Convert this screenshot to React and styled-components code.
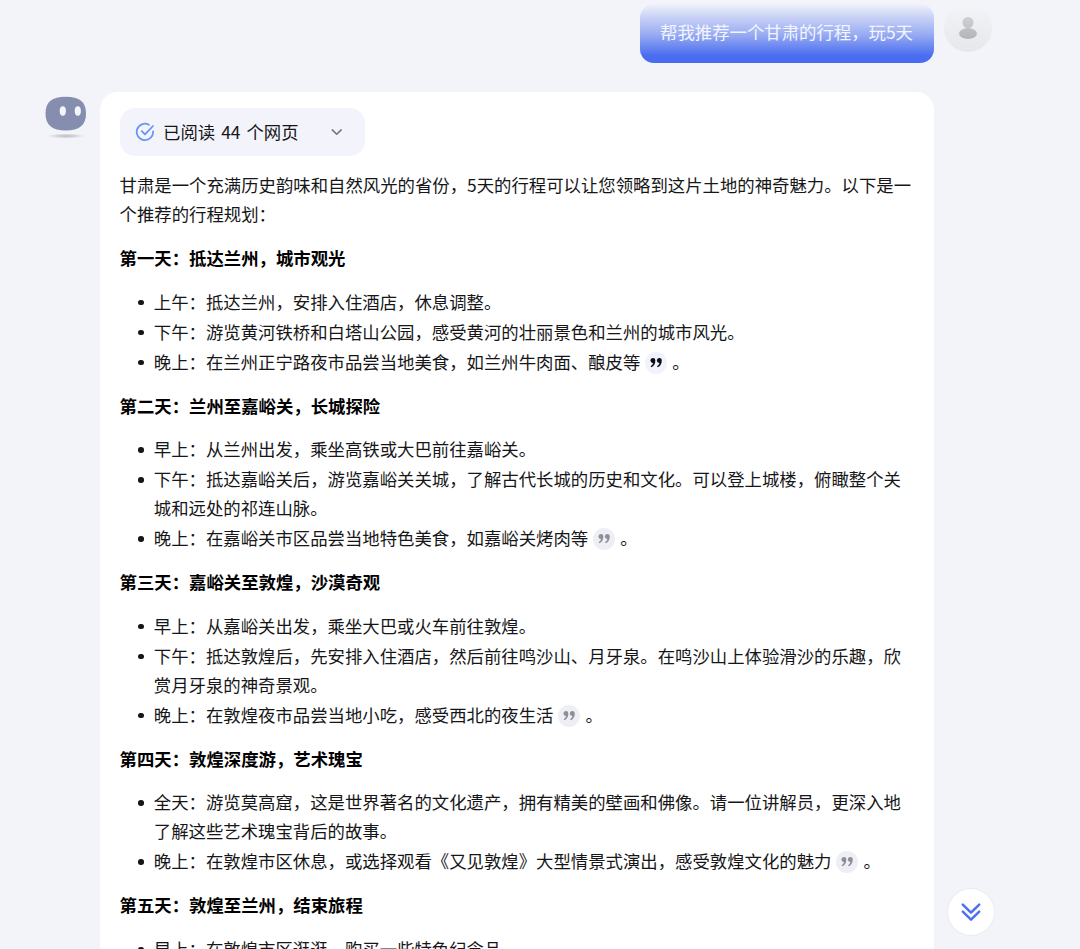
import React from "react";
import styled, { createGlobalStyle } from "styled-components";

const GlobalStyle = createGlobalStyle`
    body {
        margin: 0;
        background-color: #f3f4f9;
        font-family: "Noto Sans CJK SC", "Liberation Sans", sans-serif;
        font-size: 17.39px;
        line-height: 29.2px;
        color: #161618;
    }
`;

const Page = styled.main`
    position: relative;
    box-sizing: border-box;
    width: 1080px;
    height: 949px;
    padding: 4px 88px 0 45px;
    overflow: hidden;
`;

const UserRow = styled.div`
    display: flex;
    align-items: flex-start;
    justify-content: flex-end;
    column-gap: 10px;
    height: 88px;
`;

const UserBubble = styled.div`
    box-sizing: border-box;
    width: 294px;
    height: 59px;
    padding: 13px 20px;
    border-radius: 14px;
    background: linear-gradient(
        #f0f2fa 0%,
        #c9d2f6 22%,
        #98abf2 52%,
        #4b6ef0 87%,
        #486bf0 100%
    );
    color: #f3f5fe;
    white-space: nowrap;
`;

const UserAvatar = styled.svg`
    flex: none;
    width: 48px;
    height: 48px;
`;

const BotRow = styled.div`
    display: flex;
    align-items: flex-start;
`;

const BotAvatar = styled.svg`
    flex: none;
    width: 42px;
    height: 44px;
    margin: 4px 13px 0 0;
`;

const Answer = styled.article`
    box-sizing: border-box;
    width: 834px;
    height: 900px;
    padding: 16px 20px 16px 19.6px;
    border-radius: 18px;
    background-color: #fff;
`;

const SourcesButton = styled.button`
    display: flex;
    align-items: center;
    box-sizing: border-box;
    width: 245px;
    height: 48px;
    padding: 0 20px 0 15px;
    border: 0;
    border-radius: 15px;
    background-color: #f3f4fb;
    color: inherit;
    font: inherit;
    word-spacing: 2.1px;
`;

const SourcesLabel = styled.span`
    flex: 1;
    margin-left: 8.5px;
    text-align: left;
`;

const Intro = styled.p`
    margin: 14px 0 14.8px;
`;

const DayTitle = styled.h3`
    margin: 14.6px 0 14.4px;
    color: #000;
    font-size: inherit;
    font-weight: 700;
`;

const Plan = styled.ul`
    display: flex;
    flex-direction: column;
    row-gap: 0.75px;
    margin: 0;
    padding: 0;
    list-style: none;
`;

const PlanItem = styled.li`
    display: flex;

    &::before {
        content: "";
        flex: none;
        width: 5.6px;
        height: 5.6px;
        margin: 13px 10px 0 18.6px;
        border-radius: 50%;
        background-color: #161618;
    }
`;

const Quote = styled.span`
    display: inline-flex;
    align-items: center;
    justify-content: center;
    width: 22px;
    height: 22px;
    margin: 0 5px;
    border-radius: 50%;
    background-color: ${(props) => (props.$active ? "#f0f2fe" : "#eeeff5")};
    color: ${(props) => (props.$active ? "#0c0c12" : "#8d8e96")};
    vertical-align: 1px;
`;

const ScrollButton = styled.button`
    position: absolute;
    right: 85px;
    bottom: 13px;
    display: flex;
    align-items: center;
    justify-content: center;
    width: 48px;
    height: 48px;
    padding: 0;
    border: 1px solid #ebecf1;
    border-radius: 50%;
    background-color: #fff;
`;

const days = [
    {
        title: "第一天：抵达兰州，城市观光",
        items: [
            "上午：抵达兰州，安排入住酒店，休息调整。",
            "下午：游览黄河铁桥和白塔山公园，感受黄河的壮丽景色和兰州的城市风光。",
        ],
        cited: "晚上：在兰州正宁路夜市品尝当地美食，如兰州牛肉面、酿皮等",
        active: true,
    },
    {
        title: "第二天：兰州至嘉峪关，长城探险",
        items: [
            "早上：从兰州出发，乘坐高铁或大巴前往嘉峪关。",
            "下午：抵达嘉峪关后，游览嘉峪关关城，了解古代长城的历史和文化。可以登上城楼，俯瞰整个关城和远处的祁连山脉。",
        ],
        cited: "晚上：在嘉峪关市区品尝当地特色美食，如嘉峪关烤肉等",
    },
    {
        title: "第三天：嘉峪关至敦煌，沙漠奇观",
        items: [
            "早上：从嘉峪关出发，乘坐大巴或火车前往敦煌。",
            "下午：抵达敦煌后，先安排入住酒店，然后前往鸣沙山、月牙泉。在鸣沙山上体验滑沙的乐趣，欣赏月牙泉的神奇景观。",
        ],
        cited: "晚上：在敦煌夜市品尝当地小吃，感受西北的夜生活",
    },
    {
        title: "第四天：敦煌深度游，艺术瑰宝",
        items: [
            "全天：游览莫高窟，这是世界著名的文化遗产，拥有精美的壁画和佛像。请一位讲解员，更深入地了解这些艺术瑰宝背后的故事。",
        ],
        cited: "晚上：在敦煌市区休息，或选择观看《又见敦煌》大型情景式演出，感受敦煌文化的魅力",
    },
    {
        title: "第五天：敦煌至兰州，结束旅程",
        items: ["早上：在敦煌市区逛逛，购买一些特色纪念品。"],
    },
];

const QuoteIcon = () => (
    <svg width="12" height="10" viewBox="0 0 12 10" fill="currentColor">
        <path d="M2.8 0A2.5 2.5 0 0 1 5.3 2.9C5.3 5.8 3.9 8.1 1.4 9.3L.6 8.2C2 7.3 2.8 6.3 3 5A2.5 2.5 0 1 1 2.8 0Z" />
        <path d="M9.2 0a2.5 2.5 0 0 1 2.5 2.9c0 2.9-1.4 5.2-3.9 6.4L7 8.2c1.4-.9 2.2-1.9 2.4-3.2A2.5 2.5 0 1 1 9.2 0Z" />
    </svg>
);

const Day = ({ title, items, cited, active }) => (
    <section>
        <DayTitle>{title}</DayTitle>
        <Plan>
            {items.map((item) => (
                <PlanItem key={item}>
                    <span>{item}</span>
                </PlanItem>
            ))}
            {cited && (
                <PlanItem>
                    <span>
                        {cited}
                        <Quote $active={active}>
                            <QuoteIcon />
                        </Quote>
                        。
                    </span>
                </PlanItem>
            )}
        </Plan>
    </section>
);

const App = () => (
    <Page>
        <GlobalStyle />
        <UserRow>
            <UserBubble>帮我推荐一个甘肃的行程，玩5天</UserBubble>
            <UserAvatar viewBox="0 0 48 48">
                <defs>
                    <linearGradient id="avatarBg" x1="0" y1="0" x2="0" y2="1">
                        <stop offset="0" stopColor="#f3f4f8" />
                        <stop offset="1" stopColor="#e6e7ea" />
                    </linearGradient>
                    <linearGradient id="avatarHead" x1="0" y1="0" x2="0" y2="1">
                        <stop offset="0" stopColor="#cfd0d4" />
                        <stop offset="1" stopColor="#c3c4c8" />
                    </linearGradient>
                    <linearGradient id="avatarBody" x1="0" y1="0" x2="0" y2="1">
                        <stop offset="0" stopColor="#bfc0c4" />
                        <stop offset="1" stopColor="#b3b4b8" />
                    </linearGradient>
                </defs>
                <circle cx="24" cy="24" r="24" fill="url(#avatarBg)" />
                <circle cx="24" cy="18.5" r="5.5" fill="url(#avatarHead)" />
                <ellipse cx="24" cy="29.5" rx="9" ry="5.4" fill="url(#avatarBody)" />
            </UserAvatar>
        </UserRow>
        <BotRow>
            <BotAvatar viewBox="0 0 42 44">
                <defs>
                    <radialGradient id="botShadow">
                        <stop offset="0" stopColor="#b9babd" />
                        <stop offset="0.5" stopColor="#d5d6da" />
                        <stop offset="1" stopColor="#f3f4f9" />
                    </radialGradient>
                </defs>
                <ellipse cx="21" cy="40" rx="19" ry="2.6" fill="url(#botShadow)" />
                <path
                    d="M20.8.8C34.5.8 41 6 41 17.5S34.5 34.5 20.8 34.5.5 29 .5 17.5 7 .8 20.8.8Z"
                    fill="#868eb0"
                />
                <ellipse cx="17.8" cy="15" rx="3.1" ry="4.7" fill="#f5f6fb" />
                <ellipse cx="32.8" cy="15" rx="3.1" ry="4.7" fill="#f5f6fb" />
            </BotAvatar>
            <Answer>
                <SourcesButton>
                    <svg width="20" height="20" viewBox="0 0 20 20" fill="none" stroke="#6b93f3" strokeWidth="1.8" strokeLinecap="round" strokeLinejoin="round">
                        <path d="M13.8 2.7A8.2 8.2 0 1 0 18.1 9.5" />
                        <path d="M6.8 9.1l3.2 3.2 8-8.3" />
                    </svg>
                    <SourcesLabel>已阅读 44 个网页</SourcesLabel>
                    <svg width="17" height="14" viewBox="0 0 17 14" fill="none" stroke="#70727c" strokeWidth="1.5" strokeLinecap="round" strokeLinejoin="round">
                        <path d="M4.2 4.9l4.5 4.4 4.5-4.4" />
                    </svg>
                </SourcesButton>
                <Intro>
                    甘肃是一个充满历史韵味和自然风光的省份，5天的行程可以让您领略到这片土地的神奇魅力。以下是一个推荐的行程规划：
                </Intro>
                {days.map((day) => (
                    <Day key={day.title} {...day} />
                ))}
            </Answer>
        </BotRow>
        <ScrollButton>
            <svg width="20" height="20" viewBox="0 0 20 20" fill="none" stroke="#4d70f2" strokeWidth="2.5" strokeLinecap="round" strokeLinejoin="round">
                <path d="M1.8 2.7l8.2 8 8.2-8" />
                <path d="M1.8 9.6l8.2 8 8.2-8" />
            </svg>
        </ScrollButton>
    </Page>
);

export default App;
